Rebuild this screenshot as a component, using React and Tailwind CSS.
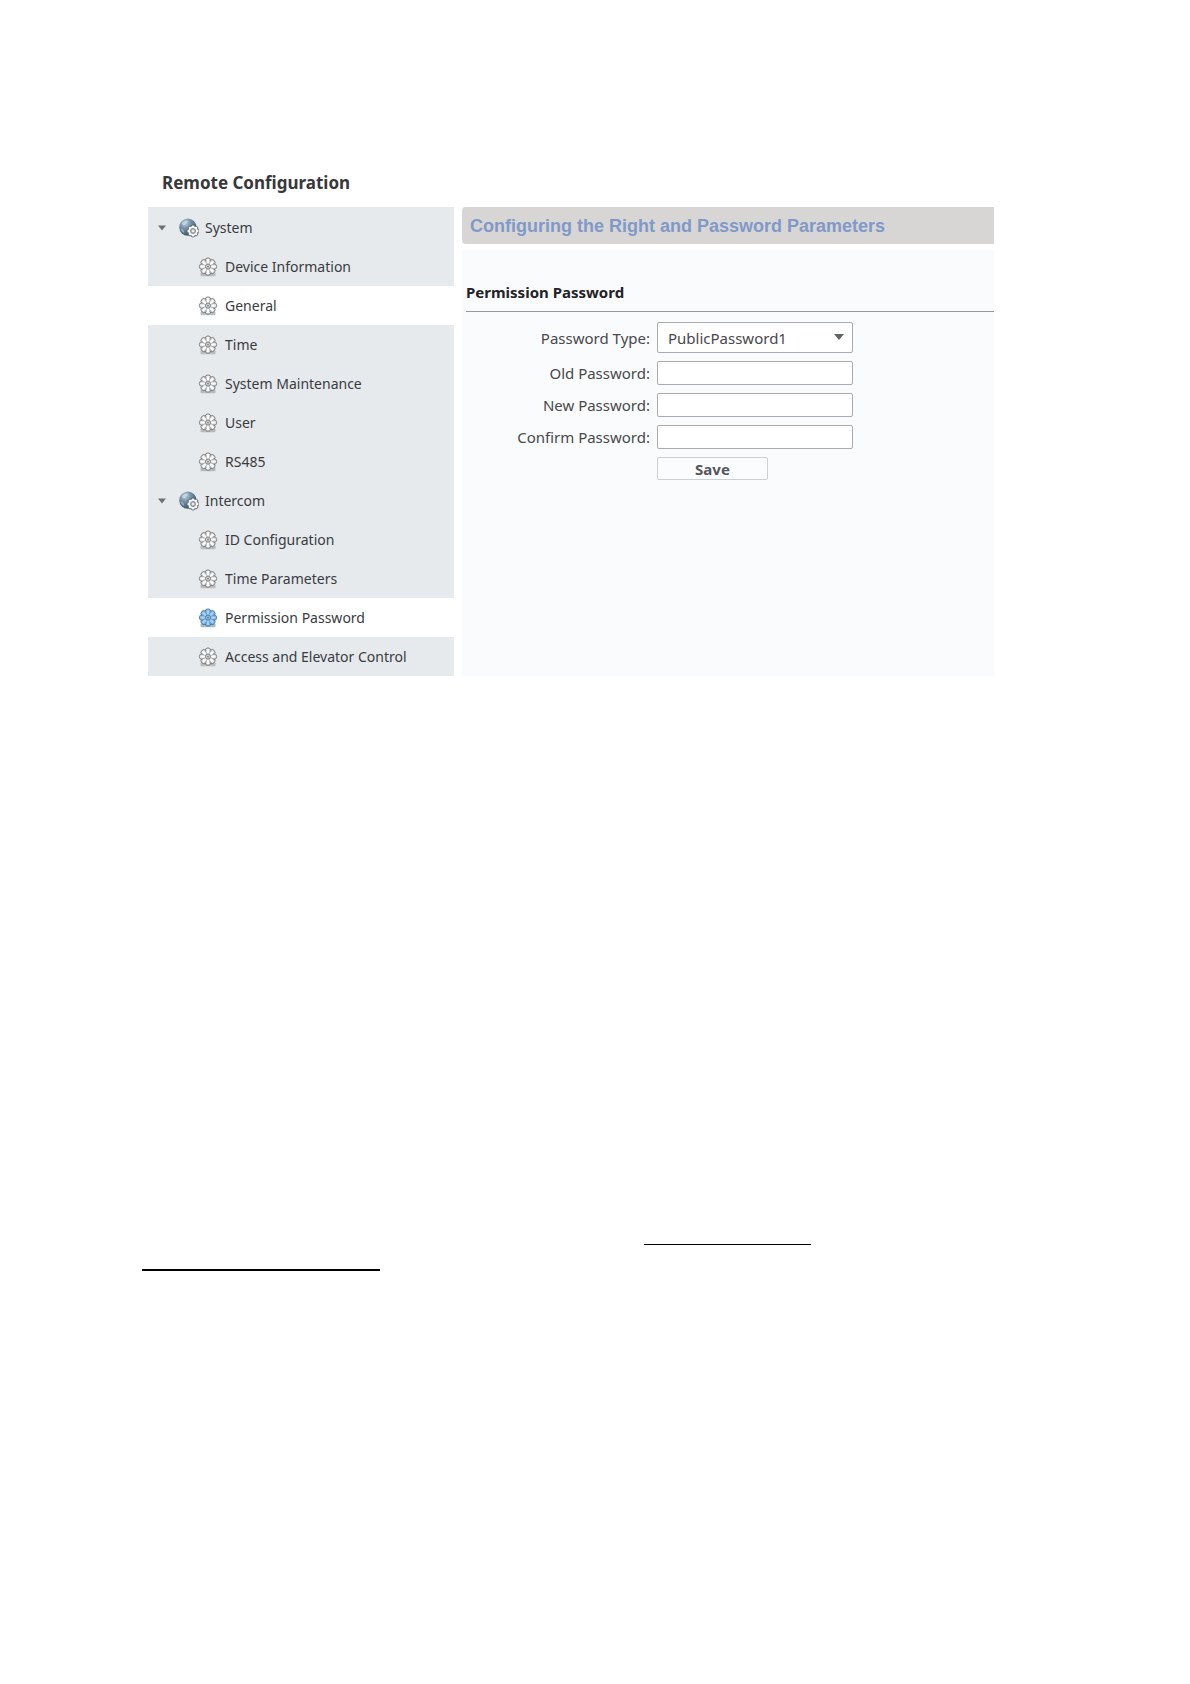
import React from "react";

const petals = [0, 1, 2, 3, 4, 5, 6, 7];

function Gear({ active }) {
  const fill = active ? "#86bbe4" : "#e2e3e4";
  const edge = active ? "#4b7698" : "#77797c";
  return (
    <svg viewBox="0 0 20 20" className="h-5 w-5 shrink-0" aria-hidden="true">
      <rect x="2.5" y="15.6" width="15" height="3.6" rx="1" fill={active ? "#7f9fb8" : "#a3a6a8"} opacity="0.7" />
      {petals.map((i) => (
        <circle key={"o" + i} cx="10" cy="3.700" r="2.800" fill={fill} stroke={edge} strokeWidth="0.9" transform={`rotate(${i * 45} 10 9.600)`} />
      ))}
      <circle cx="10" cy="9.600" r="6.600" fill={active ? "#5f9bcc" : "#a9acae"} />
      {petals.map((i) => (
        <ellipse key={"p" + i} cx="10" cy="4.500" rx="1.4" ry="2.4" fill={active ? "#a5d0f2" : "#fbfbfb"} transform={`rotate(${i * 45} 10 9.600)`} />
      ))}
      <circle cx="10" cy="9.600" r="2.500" fill={active ? "#8cc1ea" : "#d3d5d7"} stroke={edge} strokeWidth="0.8" />
      <circle cx="10" cy="9.600" r="0.9" fill={edge} />
    </svg>
  );
}

function Globe() {
  return (
    <svg viewBox="0 0 20 20" className="h-5 w-5 shrink-0" aria-hidden="true">
      <defs>
        <radialGradient id="globe" cx="0.35" cy="0.25" r="0.8">
          <stop offset="0" stopColor="#b9d0df" />
          <stop offset="0.4" stopColor="#7793a8" />
          <stop offset="1" stopColor="#35505f" />
        </radialGradient>
      </defs>
      <circle cx="8.8" cy="9.2" r="8.600" fill="url(#globe)" />
      <path d="M3 5.2c1.6-2.2 4.6-3 6.4-2.2-.4 1.6-2 1.6-2.6 3.2-.8 1.6-3.2 1.8-3.8-1z" fill="#c9dbe6" opacity="0.75" />
      <path d="M1.6 10.6c2 .4 3.400 1.600 3.600 4.400-1.800-.8-3.200-2.400-3.600-4.400z" fill="#c3d3dd" opacity="0.6" />
      {petals.map((i) => (
        <circle key={i} cx="14" cy="8.800" r="1.900" fill="#f6f7f8" stroke="#4d575e" strokeWidth="0.8" transform={`rotate(${i * 45} 14 13)`} />
      ))}
      <circle cx="14" cy="13" r="4.500" fill="#f4f5f6" />
      <circle cx="14" cy="13" r="2.500" fill="#b9bec2" stroke="#70787d" strokeWidth="0.8" />
      <circle cx="14" cy="13" r="1" fill="#ffffff" />
    </svg>
  );
}

const groups = [
  {
    name: "System",
    items: [
      { name: "Device Information" },
      { name: "General", white: true },
      { name: "Time" },
      { name: "System Maintenance" },
      { name: "User" },
      { name: "RS485" },
    ],
  },
  {
    name: "Intercom",
    items: [
      { name: "ID Configuration" },
      { name: "Time Parameters" },
      { name: "Permission Password", white: true, active: true },
      { name: "Access and Elevator Control" },
    ],
  },
];

function Sidebar() {
  return (
    <nav className="w-[306px] shrink-0 bg-[#e6eaed] pt-px text-sm text-[#3a3b40]" aria-label="Configuration sections">
      {groups.map((g) => (
        <div key={g.name}>
          <button type="button" aria-expanded="true" className="flex h-[39px] w-full items-center pl-[9px] text-left">
            <svg viewBox="0 0 10 6" className="mr-3 h-[6px] w-[10px]" aria-hidden="true">
              <path d="M1 0.500h8L5 5.500z" fill="#6d7175" />
            </svg>
            <Globe />
            <span className="ml-[6px]">{g.name}</span>
          </button>
          <ul>
            {g.items.map((it) => (
              <li key={it.name}>
                <a
                  href="#"
                  aria-current={it.active ? "page" : undefined}
                  className={`flex h-[39px] items-center gap-[7px] pl-[50px] ${it.white ? "bg-white" : ""}`}
                >
                  <Gear active={it.active} />
                  <span>{it.name}</span>
                </a>
              </li>
            ))}
          </ul>
        </div>
      ))}
    </nav>
  );
}

function PasswordField({ id, label }) {
  return (
    <>
      <label htmlFor={id} className="text-right">{label}</label>
      <input id={id} type="password" className="h-6 w-full rounded-xs border border-[#a9abae] bg-white px-2 outline-none" />
    </>
  );
}

function PermissionForm() {
  return (
    <form className="grid grid-cols-[184px_196px] items-center gap-x-[7px] gap-y-2 pt-[10px] text-[15px] leading-6 text-[#48484a]" onSubmit={(e) => e.preventDefault()}>
      <label htmlFor="ptype" className="text-right">Password Type:</label>
      <div className="relative">
        <select id="ptype" className="block h-[31px] w-full appearance-none rounded-xs border border-[#a9abae] bg-white pl-[10px] outline-none">
          <option>PublicPassword1</option>
        </select>
        <svg viewBox="0 0 10 6" className="pointer-events-none absolute top-3 right-[9px] h-[6px] w-[10px]" aria-hidden="true">
          <path d="M0 0h10L5 6z" fill="#606366" />
        </svg>
      </div>
      <PasswordField id="old" label="Old Password:" />
      <PasswordField id="new" label="New Password:" />
      <PasswordField id="confirm" label="Confirm Password:" />
      <button type="submit" className="col-start-2 h-[23px] w-[111px] rounded-xs border border-[#cdd0d2] bg-[#fbfcfd] text-[15px] leading-5 font-bold text-[#55565a]">
        Save
      </button>
    </form>
  );
}

export default function App() {
  return (
    <div className="min-h-screen bg-white font-['Noto_Sans',sans-serif]">
      <main className="pt-[169px] pr-[196px] pl-[148px]">
        <h1 className="mb-[10px] pl-[14px] text-[17px] leading-7 font-bold text-[#38383a]">Remote Configuration</h1>
        <div className="flex gap-2">
          <Sidebar />
          <section className="flex min-w-0 flex-1 flex-col bg-[#fafbfd]">
            <div className="border-b-[6px] border-white">
              <h2 className="rounded-l-sm bg-[#d7d6d4] pt-px pl-2 font-['Liberation_Sans',sans-serif] text-lg leading-9 font-bold whitespace-nowrap text-[#8199c8]">
                Configuring the Right and Password Parameters
              </h2>
            </div>
            <div className="pt-[30px] pl-1">
              <h3 className="border-b border-[#97989b] pb-[7px] text-[15px] leading-6 font-bold text-[#232226]">Permission Password</h3>
              <PermissionForm />
            </div>
          </section>
        </div>
      </main>
      <div className="mt-[568px] pr-[379px] pl-[142px]">
        <hr className="ml-auto w-[167px] border-t border-black" />
        <hr className="mt-6 w-[238px] border-t-2 border-black" />
      </div>
    </div>
  );
}
